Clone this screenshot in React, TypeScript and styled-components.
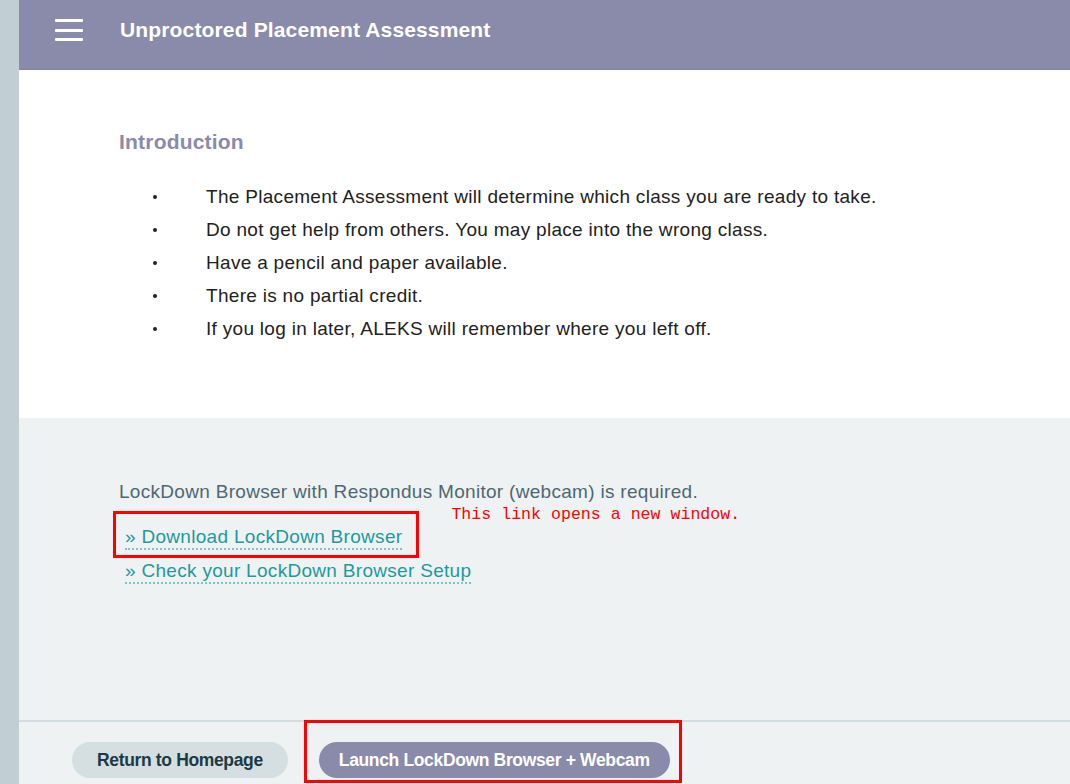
import React from 'react'
import styled, { createGlobalStyle } from 'styled-components'

const GlobalStyle = createGlobalStyle`
  html, body {
    margin: 0;
    padding: 0;
    height: 100%;
    overflow: hidden;
  }
  body {
    font-family: 'Liberation Sans', Arial, sans-serif;
    background: #c1ced4;
  }
`

const Page = styled.div`
  display: flex;
  height: 784px;
`

const SideStrip = styled.div`
  width: 19px;
  flex-shrink: 0;
  background: #c1ced4;
`

const Main = styled.div`
  flex: 1;
  display: flex;
  flex-direction: column;
`

const Header = styled.header`
  height: 70px;
  flex-shrink: 0;
  display: flex;
  align-items: center;
  padding-bottom: 9px;
  box-sizing: border-box;
  background: #8a8aab;
  border-bottom: 1px solid #8282a2;
`

const MenuButton = styled.button`
  margin-left: 36px;
  width: 28px;
  height: 22px;
  padding: 0;
  border: 0;
  background: transparent;
  display: flex;
  flex-direction: column;
  justify-content: space-between;
  cursor: pointer;
`

const MenuLine = styled.span`
  display: block;
  height: 3px;
  border-radius: 1px;
  background: #fff;
`

const Title = styled.h1`
  margin: 0 0 0 37px;
  font-size: 21px;
  font-weight: 700;
  color: #fff;
  letter-spacing: 0.15px;
`

const Intro = styled.section`
  height: 348px;
  flex-shrink: 0;
  background: #fff;
  padding: 60px 0 0 100px;
  box-sizing: border-box;
`

const SectionTitle = styled.h2`
  margin: 0;
  font-size: 21px;
  font-weight: 700;
  color: #8b8aab;
  letter-spacing: 0.2px;
`

const BulletList = styled.ul`
  list-style: none;
  margin: 26px 0 0;
  padding: 0 0 0 34px;
`

const Bullet = styled.li`
  display: flex;
  align-items: center;
  height: 33px;
  font-size: 19px;
  letter-spacing: 0.3px;
  color: #222;

  &::before {
    content: '';
    width: 4px;
    height: 4px;
    border-radius: 50%;
    background: #222;
    margin-right: 49px;
    flex-shrink: 0;
  }
`

const Requirements = styled.section`
  flex: 1;
  background: #eef2f3;
  padding: 63px 0 0 100px;
  box-sizing: border-box;
`

const Notice = styled.p`
  margin: 0;
  font-size: 19px;
  letter-spacing: 0.3px;
  color: #4f6772;
`

const LinkRow = styled.div`
  display: flex;
  align-items: flex-start;
`

const Highlight = styled.div`
  margin: 8px 0 0 -6px;
  padding: 12px 14px 5px 9px;
  border: 3px solid #ff0000;
`

const Link = styled.a`
  display: inline-block;
  font-size: 19px;
  letter-spacing: 0.3px;
  color: #1d9a9d;
  text-decoration: none;
  border-bottom: 2px dotted #7cc3c5;
  line-height: 22px;
  cursor: pointer;
`

const PlainLink = styled(Link)`
  margin: 2px 0 0 6px;
`

const NewWindowNote = styled.span`
  margin: 2px 0 0 32px;
  font-family: 'Liberation Mono', 'DejaVu Sans Mono', monospace;
  font-size: 16.6px;
  color: #ff0000;
`

const Footer = styled.footer`
  height: 64px;
  flex-shrink: 0;
  display: flex;
  align-items: flex-start;
  gap: 31px;
  padding: 20px 0 0 53px;
  box-sizing: border-box;
  background: #eef2f3;
  border-top: 2px solid #d4dcdf;
`

const PillButton = styled.button<{ $primary?: boolean }>`
  height: 36px;
  padding: 0 ${p => (p.$primary ? '20px' : '25px')};
  border: 0;
  border-radius: 18px;
  font-family: 'Liberation Sans', Arial, sans-serif;
  font-size: 17.5px;
  font-weight: 700;
  letter-spacing: -0.35px;
  background: ${p => (p.$primary ? '#8a8aab' : '#d5dfe2')};
  color: ${p => (p.$primary ? '#fff' : '#1c3a44')};
  cursor: pointer;
`

const Annotated = styled.div`
  position: relative;
`

const AnnotationBox = styled.div`
  position: absolute;
  left: -15px;
  right: -12px;
  top: -22px;
  bottom: -5px;
  border: 3px solid #ff0000;
  pointer-events: none;
`

const bullets = [
  'The Placement Assessment will determine which class you are ready to take.',
  'Do not get help from others. You may place into the wrong class.',
  'Have a pencil and paper available.',
  'There is no partial credit.',
  'If you log in later, ALEKS will remember where you left off.',
]

export default function App() {
  return (
    <>
      <GlobalStyle />
      <Page>
        <SideStrip />
        <Main>
          <Header>
            <MenuButton aria-label="Menu">
              <MenuLine />
              <MenuLine />
              <MenuLine />
            </MenuButton>
            <Title>Unproctored Placement Assessment</Title>
          </Header>
          <Intro>
            <SectionTitle>Introduction</SectionTitle>
            <BulletList>
              {bullets.map(b => (
                <Bullet key={b}>{b}</Bullet>
              ))}
            </BulletList>
          </Intro>
          <Requirements>
            <Notice>LockDown Browser with Respondus Monitor (webcam) is required.</Notice>
            <LinkRow>
              <Highlight>
                <Link>» Download LockDown Browser</Link>
              </Highlight>
              <NewWindowNote>This link opens a new window.</NewWindowNote>
            </LinkRow>
            <PlainLink>» Check your LockDown Browser Setup</PlainLink>
          </Requirements>
          <Footer>
            <PillButton>Return to Homepage</PillButton>
            <Annotated>
              <PillButton $primary>Launch LockDown Browser + Webcam</PillButton>
              <AnnotationBox />
            </Annotated>
          </Footer>
        </Main>
      </Page>
    </>
  )
}
